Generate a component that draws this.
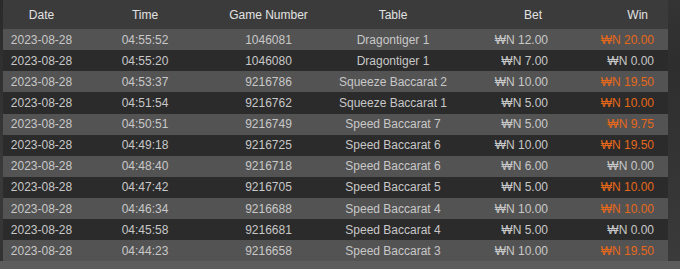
const rows = [
  ["2023-08-28", "04:55:52", "1046081", "Dragontiger 1", "12.00", "20.00", true],
  ["2023-08-28", "04:55:20", "1046080", "Dragontiger 1", "7.00", "0.00", false],
  ["2023-08-28", "04:53:37", "9216786", "Squeeze Baccarat 2", "10.00", "19.50", true],
  ["2023-08-28", "04:51:54", "9216762", "Squeeze Baccarat 1", "5.00", "10.00", true],
  ["2023-08-28", "04:50:51", "9216749", "Speed Baccarat 7", "5.00", "9.75", true],
  ["2023-08-28", "04:49:18", "9216725", "Speed Baccarat 6", "10.00", "19.50", true],
  ["2023-08-28", "04:48:40", "9216718", "Speed Baccarat 6", "6.00", "0.00", false],
  ["2023-08-28", "04:47:42", "9216705", "Speed Baccarat 5", "5.00", "10.00", true],
  ["2023-08-28", "04:46:34", "9216688", "Speed Baccarat 4", "10.00", "10.00", true],
  ["2023-08-28", "04:45:58", "9216681", "Speed Baccarat 4", "5.00", "0.00", false],
  ["2023-08-28", "04:44:23", "9216658", "Speed Baccarat 3", "10.00", "19.50", true]
];

const cols = "grid grid-cols-[77px_130px_117px_132px_101px_108px]";

export default function App() {
  return (
    <div
      className="relative h-[269px] w-[680px] overflow-hidden bg-[linear-gradient(160deg,#2a2a2a_0%,#3a3a3a_35%,#2e2e2e_60%,#3b3b3b_100%)] text-[12px]"
      style={{ fontFamily: '"Liberation Sans", Arial, sans-serif' }}
    >
      <div className="ml-[3px] w-[665px]">
        <div className={`${cols} h-[29px] items-center bg-[#3b3b3b] text-[#e2e2e2]`}>
          <div className="text-center">Date</div>
          <div className="text-center">Time</div>
          <div className="text-center">Game Number</div>
          <div className="text-center">Table</div>
          <div className="pr-[18px] text-right">Bet</div>
          <div className="pr-[20px] text-right">Win</div>
        </div>
        {rows.map((r, i) => (
          <div
            key={i}
            className={`${cols} h-[21.13px] items-center text-[#c8c8c8] ${
              i % 2 === 0 ? "bg-[#535353]" : "bg-[#2b2b2b]"
            }`}
          >
            <div className="text-center">{r[0]}</div>
            <div className="text-center">{r[1]}</div>
            <div className="text-center">{r[2]}</div>
            <div className="whitespace-nowrap text-center">{r[3]}</div>
            <div className="pr-[12px] text-right">₩N {r[4]}</div>
            <div className={`pr-[14px] text-right ${r[6] ? "text-[#e5681a]" : ""}`}>₩N {r[5]}</div>
          </div>
        ))}
      </div>
      <div className="h-[8px] bg-[#5c5c5c]" />
    </div>
  );
}
